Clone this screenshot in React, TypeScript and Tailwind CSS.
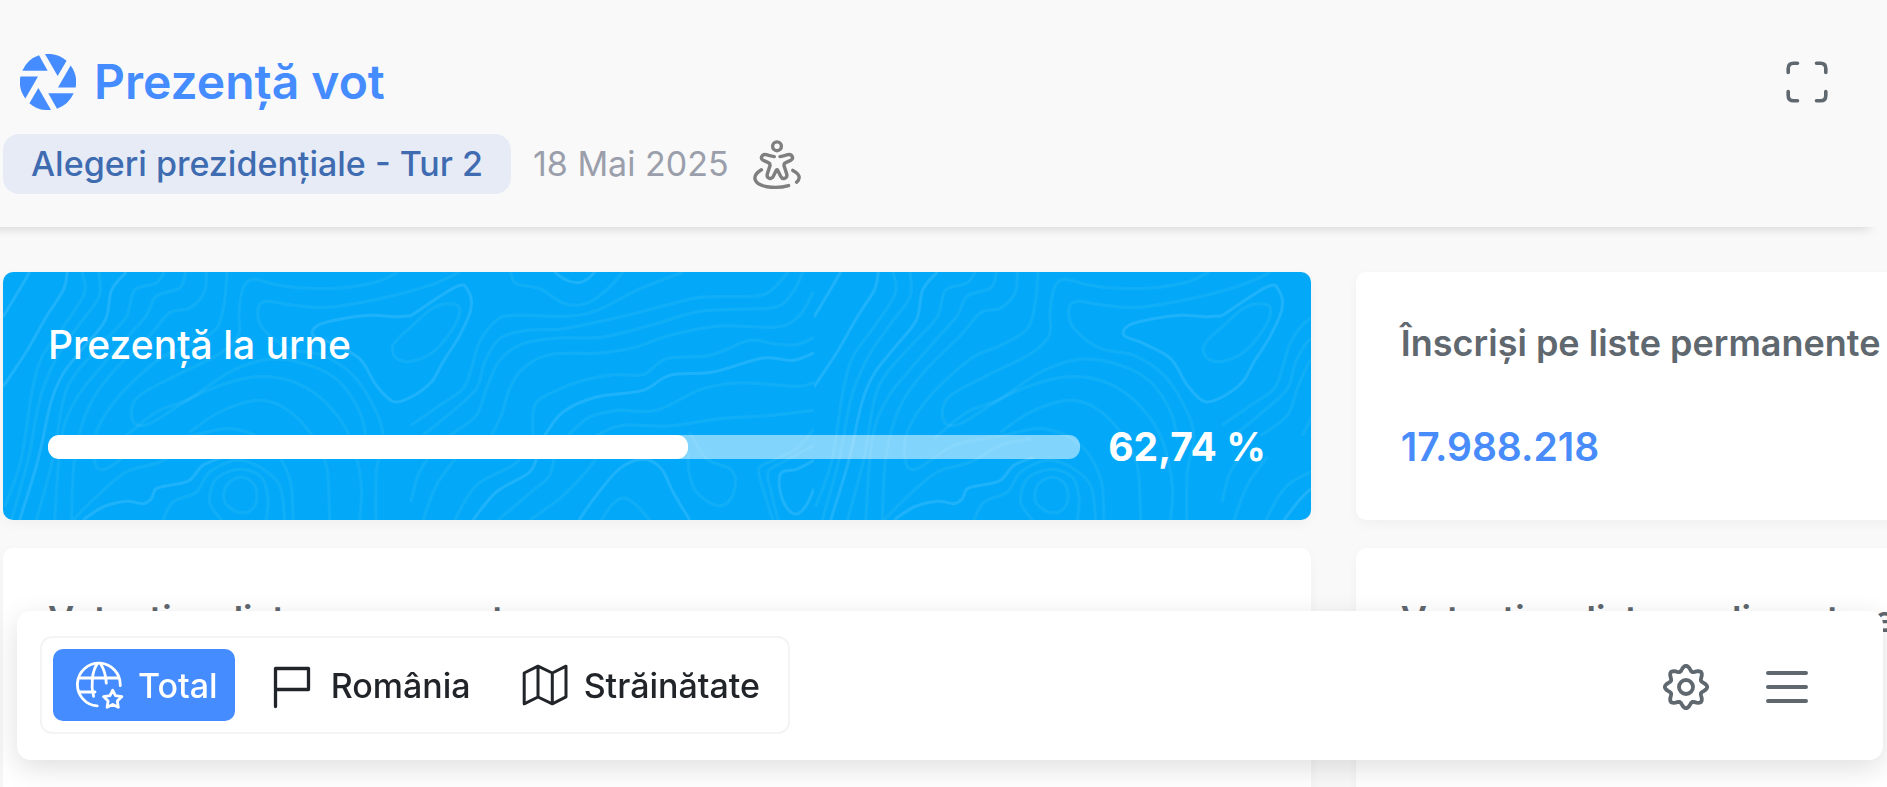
import type { ReactNode } from "react";

type Point = [number, number];

/* Elevation contours of one background tile, in thirds of a pixel. */
const contours: { soft?: boolean; points: Point[] }[] = [
  { points: [[80, 0], [45, 60], [0, 135]] },
  { points: [[193, 0], [181, 54], [130, 134], [67, 244], [0, 344]] },
  { soft: true, points: [[237, 0], [244, 64], [181, 164], [117, 254], [86, 364], [54, 564], [5, 704]] },
  { soft: true, points: [[288, 0], [288, 74], [231, 154], [165, 250], [120, 350], [100, 430], [75, 564], [25, 744]] },
  { points: [[370, 0], [326, 54], [307, 144], [244, 224], [181, 304], [143, 394], [105, 564], [50, 744]] },
  { soft: true, points: [[484, 0], [458, 34], [395, 54], [370, 134], [307, 204], [218, 304], [181, 384], [149, 564], [100, 744]] },
  { soft: true, points: [[548, 0], [530, 48], [460, 72], [430, 130], [360, 210], [290, 290], [220, 380], [175, 500], [155, 744]] },
  { soft: true, points: [[610, 0], [604, 60], [560, 108], [500, 122], [440, 190], [330, 300], [255, 410], [215, 560], [205, 744]] },
  { soft: true, points: [[672, 0], [664, 90], [640, 170], [560, 220], [470, 260], [350, 370], [280, 480], [275, 570], [310, 590], [420, 520], [560, 492], [690, 470], [800, 520], [860, 620], [870, 744]] },
  { soft: true, points: [[1185, 0], [1120, 30], [1010, 48], [900, 48], [820, 38], [750, 22], [720, 50], [708, 120], [706, 190], [650, 245], [520, 310], [410, 370], [385, 420], [400, 458], [450, 450], [580, 370], [720, 320], [830, 318], [930, 360], [1010, 440], [1050, 520], [1075, 640], [1070, 744]] },
  { soft: true, points: [[1370, 0], [1280, 40], [1130, 80], [970, 106], [860, 98], [790, 88], [765, 110], [780, 170], [860, 230], [960, 250], [1050, 310], [1110, 400], [1140, 490], [1120, 600], [1118, 744]] },
  { soft: true, points: [[1090, 500], [1070, 420], [1010, 330], [920, 280], [800, 262], [680, 300], [560, 380], [460, 420], [360, 500]] },
  { soft: true, points: [[980, 744], [970, 580], [920, 480], [840, 405], [760, 385], [650, 420], [560, 480]] },
  { points: [[1224, 131], [1360, 44], [1395, 56], [1404, 110], [1370, 190], [1320, 270], [1285, 330], [1224, 375], [1170, 388], [1120, 340], [1070, 260], [990, 215], [930, 190], [945, 160], [1010, 142], [1100, 130], [1175, 134], [1224, 131]] },
  { soft: true, points: [[1224, 165], [1290, 108], [1350, 96], [1370, 115], [1350, 170], [1290, 240], [1224, 268], [1180, 258], [1168, 225], [1190, 195], [1224, 165]] },
  { points: [[240, 744], [300, 705], [370, 688], [420, 695], [445, 680], [460, 650], [510, 638], [560, 625], [600, 580], [660, 556]] },
  { soft: true, points: [[210, 744], [290, 665], [370, 600], [470, 570], [560, 520], [650, 500]] },
  { soft: true, points: [[480, 744], [510, 690], [580, 660], [620, 600], [700, 565], [770, 585], [830, 640], [845, 744]] },
  { soft: true, points: [[655, 744], [620, 690], [640, 620], [710, 592], [775, 615], [795, 680], [790, 744]] },
  { soft: true, points: [[700, 720], [665, 690], [670, 640], [715, 615], [755, 640], [760, 690], [735, 720], [700, 720]] },
  { points: [[1654, 0], [1690, 24], [1725, 32], [1755, 20], [1775, 0]] },
  { soft: true, points: [[1522, 0], [1540, 35], [1610, 50], [1670, 88], [1710, 100], [1760, 90], [1815, 50], [1860, 0]] },
  { soft: true, points: [[1224, 460], [1310, 400], [1380, 350], [1405, 290], [1430, 210], [1480, 145], [1530, 130], [1700, 132], [1790, 112], [1900, 55], [2040, 0]] },
  { soft: true, points: [[1260, 490], [1340, 425], [1420, 350], [1445, 270], [1490, 200], [1570, 175], [1680, 170], [1850, 135], [1990, 100], [2100, 75], [2260, 72], [2310, 50], [2355, 0]] },
  { soft: true, points: [[1340, 490], [1420, 430], [1450, 350], [1490, 265], [1560, 215], [1670, 198], [1800, 195], [1960, 155], [2080, 120], [2200, 112], [2320, 105], [2370, 60], [2400, 0]] },
  { soft: true, points: [[1465, 490], [1495, 430], [1520, 350], [1560, 290], [1640, 248], [1790, 243], [1900, 225], [2000, 190], [2150, 162], [2320, 165], [2390, 130], [2430, 60]] },
  { soft: true, points: [[1590, 490], [1595, 400], [1650, 360], [1740, 325], [1830, 308], [1920, 308], [1990, 260], [2120, 250], [2240, 205], [2310, 215], [2380, 218], [2433, 196]] },
  { points: [[1625, 490], [1680, 420], [1780, 375], [1920, 355], [2000, 310], [2130, 300], [2280, 258], [2370, 265], [2433, 243]] },
  { soft: true, points: [[1695, 490], [1760, 435], [1850, 415], [1960, 415], [2100, 350], [2220, 332], [2380, 343], [2433, 332]] },
  { soft: true, points: [[1780, 490], [1860, 460], [2000, 462], [2150, 440], [2310, 430], [2433, 415]] },
  { soft: true, points: [[1224, 690], [1245, 610], [1280, 550]] },
  { soft: true, points: [[1260, 744], [1300, 640], [1360, 555]] },
  { soft: true, points: [[1355, 744], [1420, 640], [1530, 580], [1560, 540]] },
  { points: [[1410, 744], [1480, 660], [1580, 600], [1605, 540]] },
  { soft: true, points: [[1485, 744], [1590, 655], [1640, 610], [1655, 540]] },
  { soft: true, points: [[1580, 744], [1670, 680], [1740, 610], [1795, 540]] },
  { points: [[1728, 744], [1780, 670], [1850, 590], [1920, 562], [1975, 590], [2010, 660], [2060, 744]] },
  { soft: true, points: [[1795, 744], [1830, 695], [1865, 678], [1900, 700], [1940, 744]] },
  { soft: true, points: [[2060, 480], [2110, 560], [2180, 590], [2198, 630], [2180, 685], [2140, 700], [2080, 660], [2058, 600], [2056, 540]] },
  { soft: true, points: [[2310, 744], [2280, 650], [2268, 590], [2310, 565], [2380, 530], [2433, 470]] },
  { soft: true, points: [[2325, 744], [2305, 660], [2295, 600], [2340, 570], [2433, 520]] },
  { points: [[2433, 565], [2380, 592], [2335, 602], [2330, 650], [2350, 705], [2380, 726], [2410, 700], [2433, 650]] },
];

function smooth(points: Point[]) {
  let d = `M${points[0][0]} ${points[0][1]}`;
  for (let i = 0; i < points.length - 1; i++) {
    const a = points[i - 1] ?? points[i];
    const b = points[i];
    const c = points[i + 1];
    const e = points[i + 2] ?? c;
    d += `C${b[0] + (c[0] - a[0]) / 6} ${b[1] + (c[1] - a[1]) / 6} ${c[0] - (e[0] - b[0]) / 6} ${c[1] - (e[1] - b[1]) / 6} ${c[0]} ${c[1]}`;
  }
  return d;
}

function Topography() {
  return (
    <svg className="absolute inset-0 h-full w-full" aria-hidden="true">
      <defs>
        <pattern id="topography" width="811" height="248" patternUnits="userSpaceOnUse">
          <g transform="scale(0.33333)" fill="none" stroke="#fff" strokeWidth="9">
            {contours.map((line, i) => (
              <path key={i} d={smooth(line.points)} strokeOpacity={line.soft ? 0.055 : 0.1} />
            ))}
          </g>
        </pattern>
      </defs>
      <rect width="100%" height="100%" fill="url(#topography)" />
    </svg>
  );
}

function Logo() {
  return (
    <svg className="size-14" viewBox="-84 -84 168 168" fill="#448cff" aria-hidden="true">
      {[0, 60, 120, 180, 240, 300].map((angle) => (
        <path key={angle} d="M-77 -34H-1L-27 -80A84 84 0 0 0 -77 -34Z" transform={`rotate(${angle})`} />
      ))}
    </svg>
  );
}

function ExpandIcon() {
  return (
    <svg className="size-[42px]" viewBox="0 0 42 42" fill="none" stroke="#5f676f" strokeWidth="3.6" strokeLinecap="round" aria-hidden="true">
      <path d="M2.2 11.5V7.5Q2.2 2.2 7.5 2.2H11.5M30.5 2.2H34.5Q39.8 2.2 39.8 7.5V11.5M39.8 30.5V34.5Q39.8 39.8 34.5 39.8H30.5M11.5 39.8H7.5Q2.2 39.8 2.2 34.5V30.5" />
    </svg>
  );
}

function PersonIcon() {
  return (
    <svg className="h-[52px] w-12" viewBox="0 -2 48 52" fill="none" stroke="#7f7f7f" strokeWidth="3.4" strokeLinecap="round" strokeLinejoin="round" aria-hidden="true">
      <circle cx="24" cy="6.3" r="4.4" />
      <path d="M21.3 16.6C18.5 16.4 15.8 15.6 13.2 14.7C8.8 13.6 6.7 18.6 10.4 20.4L15.3 22.6Q17.4 23.6 17 25.6L14.4 33.6C13 38.4 18.4 40.2 20.2 36.6L23.2 30.4Q24 29.2 24.8 30.4L27.8 36.6C29.6 40.2 35 38.4 33.6 33.6L31 25.6Q30.6 23.6 32.7 22.6L37.6 20.4C41.3 18.6 39.2 13.6 34.8 14.7C32.2 15.6 29.8 16.3 27 16.6" />
      <path d="M8.4 29.8C-2.5 36.5 1 44.5 14 46.7C22 48 30 47.2 35.6 45.6M39.8 30.4C46.8 34 48 38.2 43.6 42.2" />
    </svg>
  );
}

function GlobeStarIcon() {
  return (
    <svg className="size-12" viewBox="0 0 48 48" fill="none" stroke="currentColor" strokeWidth="2.8" strokeLinecap="round" strokeLinejoin="round" aria-hidden="true">
      <path d="M21.2 44.9A21.4 21.4 0 1 1 44.2 24.6" />
      <path d="M3.5 17H42.5M3.5 31H19M21.5 2.4C16 10 14.6 24 17.6 35.4M24.5 2.4C28 8 30 15 30.3 22.2" />
      <path d="M36.7 29.2L39.4 34.6L45.9 35.6L41.3 40L42.3 46.3L36.7 43.4L31.1 46.3L32.1 40L27.5 35.6L34 34.6Z" />
    </svg>
  );
}

function FlagIcon() {
  return (
    <svg className="size-12" viewBox="0 0 48 48" fill="none" stroke="currentColor" strokeWidth="3.3" strokeLinecap="round" strokeLinejoin="round" aria-hidden="true">
      <path d="M6.5 45.5V7.5H39.5V28.5H6.5" />
    </svg>
  );
}

function MapIcon() {
  return (
    <svg className="size-12" viewBox="0 0 48 48" fill="none" stroke="currentColor" strokeWidth="3" strokeLinejoin="round" aria-hidden="true">
      <path d="M2.2 12L16 5.2L30.3 12L44 5.2V35.8L30.3 42.8L16 36L2.2 42.8ZM16 5.2V36M30.3 12V42.8" />
    </svg>
  );
}

const gearOutline =
  Array.from({ length: 96 }, (_, i) => {
    const angle = (i / 96) * Math.PI * 2;
    const radius = 18.7 + 2.5 * Math.cos(8 * angle);
    return `${i ? "L" : "M"}${(24 + radius * Math.sin(angle)).toFixed(2)} ${(24 - radius * Math.cos(angle)).toFixed(2)}`;
  }).join("") + "Z";

function GearIcon() {
  return (
    <svg className="size-12" viewBox="0 0 48 48" fill="none" stroke="currentColor" strokeWidth="3.8" strokeLinejoin="round" aria-hidden="true">
      <path d={gearOutline} />
      <circle cx="24" cy="24" r="7" />
    </svg>
  );
}

function MenuIcon() {
  return (
    <svg className="size-12" viewBox="0 0 48 48" fill="none" stroke="currentColor" strokeWidth="4" strokeLinecap="round" aria-hidden="true">
      <path d="M5 10H43M5 24H43M5 38H43" />
    </svg>
  );
}

function StatCard({ title, value }: { title: string; value: string }) {
  return (
    <section className="flex flex-col gap-[58px] rounded-[10px] bg-white px-[45px] py-[49px] shadow-[0_4px_12px_rgba(0,0,0,0.04)]">
      <h2 className="text-[36px] leading-[44px] font-semibold whitespace-nowrap text-[#5f676f]">{title}</h2>
      <p className="text-[39px] leading-[48px] font-semibold text-[#478cfa]">{value}</p>
    </section>
  );
}

function TabButton({ icon, label, active }: { icon: ReactNode; label: string; active?: boolean }) {
  return (
    <button
      type="button"
      aria-pressed={!!active}
      className={
        active
          ? "flex h-[72px] items-center gap-[14px] rounded-[10px] bg-[#448cff] pr-[17px] pl-[23px] text-[34px] font-medium text-white"
          : "flex h-[72px] items-center gap-[14px] rounded-[10px] pr-[17px] pl-[23px] text-[34px] font-medium text-[#212529]"
      }
    >
      {icon}
      {label}
    </button>
  );
}

export default function App() {
  const turnout = 62;
  return (
    <div className="h-screen overflow-hidden bg-[#f9f9f9] font-['Inter',sans-serif]">
      <header className="mr-[7px] -ml-5 pt-[50px] pb-[33px] pl-5 shadow-[0_12px_10px_-10px_rgba(0,0,0,0.14)]">
        <div className="flex items-center justify-between pr-[52px] pl-5">
          <a href="#" className="flex items-center gap-[18px]">
            <Logo />
            <h1 className="text-[48px] leading-[64px] font-semibold text-[#448cff]">Prezență vot</h1>
          </a>
          <button type="button" aria-label="Ecran complet">
            <ExpandIcon />
          </button>
        </div>
        <div className="mt-5 ml-[3px] flex items-center">
          <span className="rounded-2xl bg-[#e7ebf6] px-[28px] text-[34px] leading-[60px] font-medium text-[#3f6bb1]">
            Alegeri prezidențiale - Tur 2
          </span>
          <time dateTime="2025-05-18" className="ml-[22px] text-[34px] leading-[60px] text-[#9a9fab]">
            18 Mai 2025
          </time>
          <button type="button" aria-label="Accesibilitate" className="ml-6">
            <PersonIcon />
          </button>
        </div>
      </header>

      <main className="mt-[45px] ml-[3px] grid w-[141%] grid-cols-2 gap-x-[45px] gap-y-7">
        <section className="relative flex flex-col gap-[54px] overflow-hidden rounded-[10px] bg-[#03a9f8] px-[45px] py-[49px] text-white shadow-[0_4px_12px_rgba(0,0,0,0.04)]">
          <Topography />
          <h2 className="relative text-[39px] leading-[48px] font-medium">Prezență la urne</h2>
          <div className="relative flex items-center gap-7">
            <div
              role="progressbar"
              aria-label="Prezență la urne"
              aria-valuenow={turnout}
              className="h-6 grow overflow-hidden rounded-[11px] bg-white/50"
            >
              <div className="h-full rounded-[11px] bg-white" style={{ width: `${turnout}%` }} />
            </div>
            <p className="text-[39px] leading-[48px] font-bold whitespace-nowrap">62,74 %</p>
          </div>
        </section>
        <StatCard title="Înscriși pe liste permanente" value="17.988.218" />
        <StatCard title="Votanți pe liste permanente" value="10.505.733" />
        <StatCard title="Votanți pe liste suplimentare" value="1.043.202" />
      </main>

      <nav
        aria-label="Navigare"
        className="fixed right-1 bottom-[27px] left-[17px] flex items-center justify-between rounded-[14px] bg-white pt-[25px] pr-[72px] pb-[26px] pl-[23px] shadow-[0_8px_28px_rgba(0,0,0,0.13)]"
      >
        <div className="flex gap-[11px] rounded-xl border-2 border-[#f3f4f5] p-[11px]">
          <TabButton icon={<GlobeStarIcon />} label="Total" active />
          <TabButton icon={<FlagIcon />} label="România" />
          <TabButton icon={<MapIcon />} label="Străinătate" />
        </div>
        <div className="flex items-center gap-[53px] pt-1 text-[#5f676f]">
          <button type="button" aria-label="Setări">
            <GearIcon />
          </button>
          <button type="button" aria-label="Meniu">
            <MenuIcon />
          </button>
        </div>
      </nav>
    </div>
  );
}
